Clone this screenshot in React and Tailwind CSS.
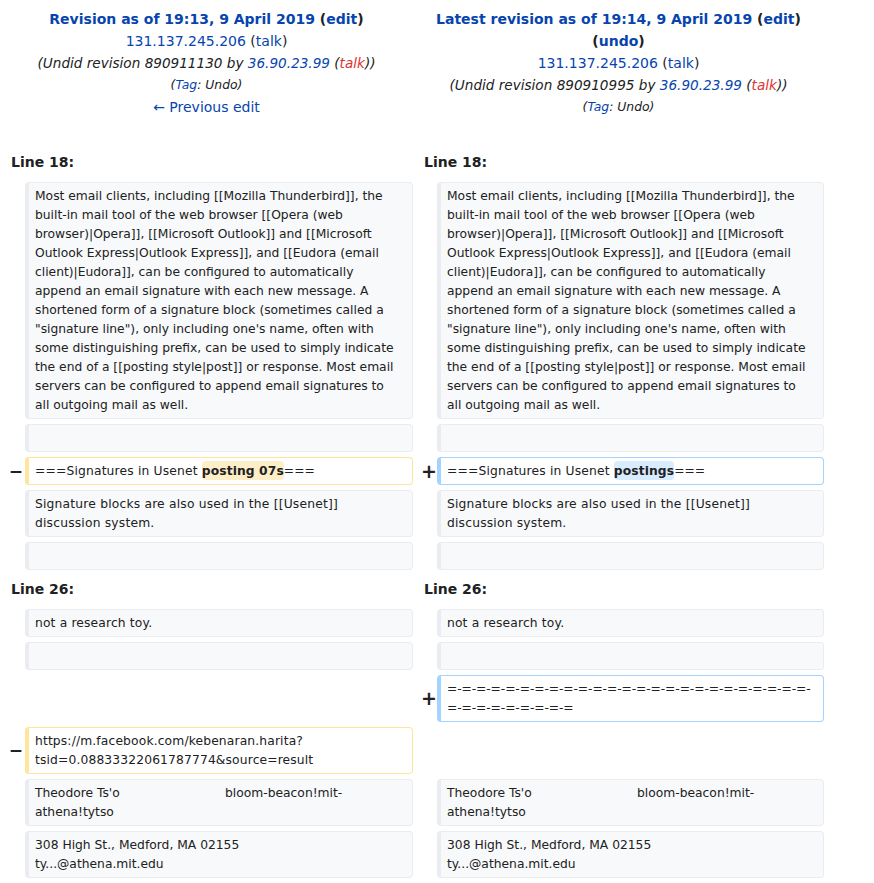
import React from 'react';

const FONT = { fontFamily: '"DejaVu Sans", Verdana, sans-serif' };

const intro = [
    'Most email clients, including [[Mozilla Thunderbird]], the',
    'built-in mail tool of the web browser [[Opera (web',
    'browser)|Opera]], [[Microsoft Outlook]] and [[Microsoft',
    'Outlook Express|Outlook Express]], and [[Eudora (email',
    'client)|Eudora]], can be configured to automatically',
    'append an email signature with each new message. A',
    'shortened form of a signature block (sometimes called a',
    '"signature line"), only including one\'s name, often with',
    'some distinguishing prefix, can be used to simply indicate',
    'the end of a [[posting style|post]] or response. Most email',
    'servers can be configured to append email signatures to',
    'all outgoing mail as well.',
];

const A = ({ children, red }) => (
    <span className={red ? 'text-[#d33]' : 'text-[#0645ad]'}>{children}</span>
);

const Box = ({ kind = 'context', children }) => {
    const tone =
        kind === 'del'
            ? 'bg-white border-[#ffe49c]'
            : kind === 'add'
            ? 'bg-white border-[#a3d3ff]'
            : 'bg-[#f8f9fa] border-[#eaecf0]';
    return (
        <div
            className={`${tone} border border-l-4 rounded-[4px] px-[6px] py-[3.5px] text-[12.3px] leading-[19px] min-h-[28px] text-[#202122] whitespace-nowrap`}
        >
            {children}
        </div>
    );
};

const Marker = ({ sign, side }) => (
    <div
        className={`flex items-center justify-end font-bold leading-none text-[#202122] ${
            side === 'left' ? 'pr-[2px] text-[17px]' : 'pr-0 text-[19px]'
        }`}
    >
        {sign}
    </div>
);

const Lines = ({ lines, className = '' }) =>
    lines.map((l, i) => (
        <div key={i} className={className}>
            {l}
        </div>
    ));

const LineNo = ({ n }) => (
    <>
        <div className="col-span-2 pl-[11px] pt-[3px] pb-[4px] font-bold text-[14px] leading-[22px] text-[#202122]">
            Line {n}:
        </div>
        <div className="col-span-2 pl-[11px] pt-[3px] pb-[4px] font-bold text-[14px] leading-[22px] text-[#202122]">
            Line {n}:
        </div>
    </>
);

const Both = ({ children }) => (
    <>
        <div />
        <Box>{children}</Box>
        <div />
        <Box>{children}</Box>
    </>
);

export default function App() {
    return (
        <div className="bg-white w-[874px] h-[883px] overflow-hidden text-[#202122]" style={FONT}>
            <div className="grid grid-cols-[25px_388px_24px_387px] gap-y-[5px]">
                {/* Revision headers */}
                <div className="col-span-2 text-center text-[14px] leading-[22px] pt-[8px]">
                    <div className="font-bold">
                        <A>Revision as of 19:13, 9 April 2019</A> (<A>edit</A>)
                    </div>
                    <div>
                        <A>131.137.245.206</A> (<A>talk</A>)
                    </div>
                    <div className="italic text-[13.6px]">
                        (Undid revision 890911130 by <A>36.90.23.99</A> (<A red>talk</A>))
                    </div>
                    <div className="italic text-[12.4px]">
                        (<A>Tag</A>: Undo)
                    </div>
                    <div>
                        <A>← Previous edit</A>
                    </div>
                </div>
                <div className="col-span-2 text-center text-[14px] leading-[22px] pt-[8px]">
                    <div className="font-bold">
                        <A>Latest revision as of 19:14, 9 April 2019</A> (<A>edit</A>)
                        <br />
                        (<A>undo</A>)
                    </div>
                    <div>
                        <A>131.137.245.206</A> (<A>talk</A>)
                    </div>
                    <div className="italic text-[13.6px]">
                        (Undid revision 890910995 by <A>36.90.23.99</A> (<A red>talk</A>))
                    </div>
                    <div className="italic text-[12.4px]">
                        (<A>Tag</A>: Undo)
                    </div>
                </div>

                <div className="col-span-4 h-[20px]" />

                <LineNo n={18} />
                <Both>
                    <Lines lines={intro} />
                </Both>
                <Both>{''}</Both>

                <Marker sign="−" side="left" />
                <Box kind="del">
                    <span className="tracking-[0.17px]">===Signatures in Usenet </span>
                    <span className="font-bold bg-[#feeec8] rounded-[4px] py-[2.5px] tracking-[0.1px]">posting 07s</span>===
                </Box>
                <Marker sign="+" side="right" />
                <Box kind="add">
                    <span className="tracking-[0.17px]">===Signatures in Usenet </span>
                    <span className="font-bold bg-[#d8ecff] rounded-[4px] py-[2.5px] tracking-[0.1px]">postings</span>===
                </Box>

                <Both>
                    <Lines
                        className="tracking-[0.19px]"
                        lines={['Signature blocks are also used in the [[Usenet]]', 'discussion system.']}
                    />
                </Both>
                <Both>{''}</Both>

                <LineNo n={26} />
                <Both>
                    <span className="tracking-[0.15px]">not a research toy.</span>
                </Both>
                <Both>{''}</Both>

                <div className="col-span-2" />
                <Marker sign="+" side="right" />
                <Box kind="add">
                    <Lines
                        className="tracking-[-0.1px]"
                        lines={['=-=-=-=-=-=-=-=-=-=-=-=-=-=-=-=-=-=-=-=-=-=-=-=-=-', '=-=-=-=-=-=-=-=-=']}
                    />
                </Box>

                <Marker sign="−" side="left" />
                <Box kind="del">
                    <Lines
                        className="tracking-[0.14px]"
                        lines={['https://m.facebook.com/kebenaran.harita?', 'tsid=0.08833322061787774&source=result']}
                    />
                </Box>
                <div className="col-span-2" />

                <Both>
                    <div>
                        <span className="inline-block w-[190px]">Theodore Ts'o</span>bloom-beacon!mit-
                    </div>
                    <div>athena!tytso</div>
                </Both>
                <Both>
                    <Lines lines={['308 High St., Medford, MA 02155', 'ty...@athena.mit.edu']} />
                </Both>
            </div>
        </div>
    );
}
